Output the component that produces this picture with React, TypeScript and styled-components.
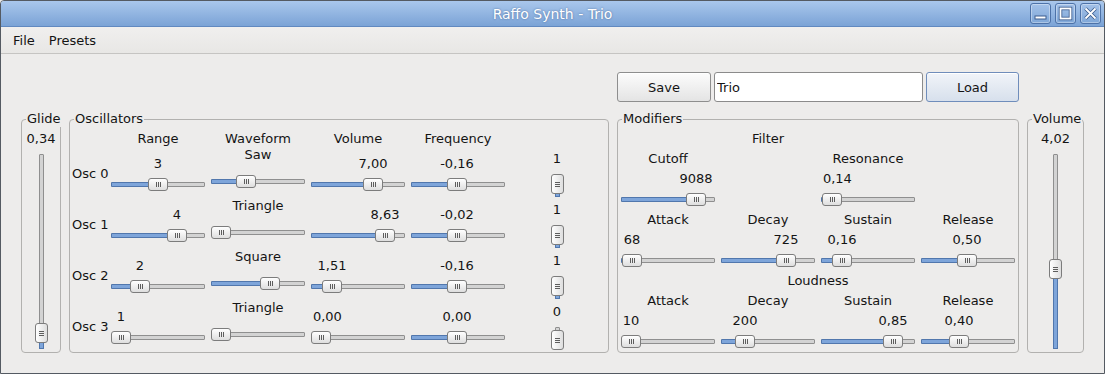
import React from 'react';
import styled, { createGlobalStyle } from 'styled-components';

const GlobalStyle = createGlobalStyle`
  html, body {
    margin: 0;
    padding: 0;
    background: #edeceb;
  }
  body {
    font-family: "DejaVu Sans", "Liberation Sans", sans-serif;
    font-size: 13px;
    color: #141414;
  }
`;

const Window = styled.div`
  width: 1105px;
  height: 374px;
  box-sizing: border-box;
  border: 1px solid #545a62;
  border-radius: 4px 4px 0 0;
  background: #edeceb;
  display: flex;
  flex-direction: column;
  overflow: hidden;
`;

const TitleBar = styled.div`
  height: 25px;
  display: grid;
  grid-template-columns: 1fr auto 1fr;
  align-items: center;
  background: linear-gradient(#a9c7ec, #7ba3d6);
  border-bottom: 1px solid #6189c0;
`;

const TitleText = styled.div`
  grid-column: 2;
  color: #fff;
  font-size: 14px;
  text-shadow: 0 0 2px rgba(30, 60, 110, 0.6);
`;

const TitleButtons = styled.div`
  grid-column: 3;
  justify-self: end;
  display: flex;
  gap: 4px;
  margin-right: 3px;
`;

const TitleButton = styled.div`
  width: 21px;
  height: 21px;
  box-sizing: border-box;
  border: 1px solid #4d72a8;
  border-radius: 3px;
  background: linear-gradient(#a3c1e8, #7fa7d8);
  box-shadow: inset 0 0 0 1px rgba(255, 255, 255, 0.35);
  display: flex;
  align-items: center;
  justify-content: center;
`;

const MenuBar = styled.div`
  height: 26px;
  display: flex;
  align-items: center;
  gap: 14px;
  padding: 0 12px;
  background: linear-gradient(#f0efee, #e8e7e5);
  border-bottom: 1px solid #c5c4c2;
  font-size: 13px;
`;

const Content = styled.div`
  flex: 1;
  padding: 18px 20px 0 20px;
  display: grid;
  grid-template-columns: 40px 540px 402px 57px;
  grid-template-rows: 30px 234px;
  column-gap: 8px;
  row-gap: 17px;
`;

const PresetRow = styled.div`
  grid-column: 3;
  grid-row: 1;
  display: grid;
  grid-template-columns: 94px 1fr 93px;
  gap: 3px;
`;

const PushButton = styled.button<{ $default?: boolean }>`
  font: inherit;
  color: #141414;
  margin: 0;
  padding: 0;
  border: 1px solid ${(p) => (p.$default ? '#6f8dbb' : '#8e8e8e')};
  border-radius: 3px;
  background: ${(p) =>
    p.$default ? 'linear-gradient(#f1f4f9, #d7e0ec)' : 'linear-gradient(#fcfcfc, #e4e4e4)'};
  box-shadow: inset 0 1px 0 #fff;
`;

const NameInput = styled.input`
  font: inherit;
  color: #141414;
  margin: 0;
  padding: 0 2px;
  border: 1px solid #8b8b8b;
  border-radius: 3px;
  background: #fff;
  outline: none;
`;

const GroupBox = styled.div<{ $col: number }>`
  grid-column: ${(p) => p.$col};
  grid-row: 2;
  position: relative;
  box-sizing: border-box;
  border: 1px solid #b2b1af;
  border-radius: 4px;
`;

const GroupTitle = styled.div`
  position: absolute;
  top: -9px;
  left: 4px;
  padding: 0 1px;
  line-height: 16px;
  background: #edeceb;
  white-space: nowrap;
`;

const VerticalGroup = styled.div`
  display: flex;
  flex-direction: column;
  align-items: center;
  padding-top: 9px;
`;

const TextLine = styled.div`
  line-height: 20px;
  white-space: nowrap;
`;

/* ---- sliders ---- */

const SliderCell = styled.div<{ $w: number }>`
  width: ${(p) => p.$w}px;
  display: flex;
  flex-direction: column;
`;

const ValueText = styled.div`
  align-self: flex-start;
  line-height: 20px;
  white-space: nowrap;
  transform: translateX(-50%);
`;

const SliderArea = styled.div`
  height: 21px;
  display: flex;
  align-items: center;
`;

const HTrack = styled.div<{ $w: number }>`
  position: relative;
  width: ${(p) => p.$w}px;
  height: 13px;
  display: flex;
  align-items: center;
`;

const HGroove = styled.div`
  width: 100%;
  height: 5px;
  box-sizing: border-box;
  border: 1px solid #8f8f8f;
  background: #d3d3d3;
  border-radius: 1px;
`;

const HFill = styled.div`
  position: absolute;
  left: 0;
  top: 4px;
  height: 5px;
  box-sizing: border-box;
  border: 1px solid #5177ad;
  background: #7ea5da;
  border-radius: 1px;
`;

const Handle = styled.div<{ $vertical?: boolean }>`
  position: absolute;
  box-sizing: border-box;
  width: ${(p) => (p.$vertical ? '13px' : '20px')};
  height: ${(p) => (p.$vertical ? '20px' : '13px')};
  border: 1px solid #7c7c7c;
  border-radius: 3px;
  background: linear-gradient(${(p) => (p.$vertical ? '90deg' : '180deg')}, #ffffff, #dedede);
  display: flex;
  align-items: center;
  justify-content: center;
`;

const Grip = styled.div<{ $vertical?: boolean }>`
  width: 5px;
  height: 5px;
  background: repeating-linear-gradient(
    ${(p) => (p.$vertical ? '180deg' : '90deg')},
    #5d5d5d 0 1px,
    transparent 1px 2px
  );
`;

const VTrack = styled.div<{ $len: number }>`
  position: relative;
  width: 13px;
  height: ${(p) => p.$len}px;
  display: flex;
  justify-content: center;
`;

const VGroove = styled.div`
  width: 5px;
  height: 100%;
  box-sizing: border-box;
  border: 1px solid #8f8f8f;
  background: #d3d3d3;
  border-radius: 1px;
`;

const VFill = styled.div`
  position: absolute;
  bottom: 0;
  left: 4px;
  width: 5px;
  box-sizing: border-box;
  border: 1px solid #5177ad;
  background: #7ea5da;
`;

function HSlider({ frac, width = 94 }: { frac: number; width?: number }) {
  const left = Math.round(frac * (width - 20));
  return (
    <HTrack $w={width}>
      <HGroove />
      <HFill style={{ width: left + 10 }} />
      <Handle style={{ left }}>
        <Grip />
      </Handle>
    </HTrack>
  );
}

function VSlider({ frac, len }: { frac: number; len: number }) {
  const top = Math.round((1 - frac) * (len - 20));
  const fill = len - top - 10;
  return (
    <VTrack $len={len}>
      <VGroove />
      {frac > 0 && <VFill style={{ height: fill }} />}
      <Handle $vertical style={{ top }}>
        <Grip $vertical />
      </Handle>
    </VTrack>
  );
}

function ValueSlider({ value, frac, width = 94 }: { value: string; frac: number; width?: number }) {
  const center = Math.round(frac * (width - 20)) + 10;
  const half = (value.length * 8.2) / 2;
  const x = Math.min(Math.max(center, half), width - half);
  return (
    <SliderCell $w={width}>
      <ValueText style={{ marginLeft: x }}>{value}</ValueText>
      <SliderArea>
        <HSlider frac={frac} width={width} />
      </SliderArea>
    </SliderCell>
  );
}

/* ---- oscillators ---- */

const OscGrid = styled.div`
  display: grid;
  grid-template-columns: 35px repeat(4, 94px) 92px;
  grid-template-rows: 20px 46px 51px 51px 51px;
  column-gap: 6px;
  align-items: end;
  padding-top: 9px;
`;

const ColHeader = styled.div`
  line-height: 20px;
  text-align: center;
  white-space: nowrap;
`;

const OscLabel = styled.div`
  line-height: 20px;
  white-space: nowrap;
  padding-left: 2px;
  margin-bottom: 11px;
`;

const WaveCell = styled.div`
  display: flex;
  flex-direction: column;
  padding-bottom: 7px;
`;

const WaveName = styled.div`
  line-height: 20px;
  text-align: center;
  margin-bottom: 10px;
`;

const SwitchCell = styled.div`
  display: flex;
  flex-direction: column;
  align-items: center;
  gap: 5px;
  margin-bottom: -2px;
`;

/* ---- modifiers ---- */

const ModGrid = styled.div`
  display: grid;
  grid-template-columns: repeat(4, 94px);
  column-gap: 6px;
  padding: 9px 0 0 3px;
`;

const SectionTitle = styled.div<{ $span: string }>`
  grid-column: ${(p) => p.$span};
  line-height: 20px;
  text-align: center;
`;

const ParamTitle = styled.div<{ $col: number }>`
  grid-column: ${(p) => p.$col};
  line-height: 20px;
  text-align: center;
`;

const CellSlot = styled.div<{ $col: number }>`
  grid-column: ${(p) => p.$col};
`;

const oscRows = [
  { range: '3', rf: 0.5, wave: 'Saw', wf: 1 / 3, vol: '7,00', vf: 0.7, freq: '-0,16', on: 1 },
  { range: '4', rf: 0.75, wave: 'Triangle', wf: 0, vol: '8,63', vf: 0.863, freq: '-0,02', on: 1 },
  { range: '2', rf: 0.25, wave: 'Square', wf: 2 / 3, vol: '1,51', vf: 0.151, freq: '-0,16', on: 1 },
  { range: '1', rf: 0, wave: 'Triangle', wf: 0, vol: '0,00', vf: 0, freq: '0,00', on: 0 },
];

const envNames = ['Attack', 'Decay', 'Sustain', 'Release'];
const filterEnv = [
  { v: '68', f: 0.014 },
  { v: '725', f: 0.74 },
  { v: '0,16', f: 0.15 },
  { v: '0,50', f: 0.49 },
];
const loudEnv = [
  { v: '10', f: 0 },
  { v: '200', f: 0.19 },
  { v: '0,85', f: 0.84 },
  { v: '0,40', f: 0.38 },
];

function WinIcon({ kind }: { kind: 'min' | 'max' | 'close' }) {
  const dark = '#3c5d8e';
  if (kind === 'min') {
    return (
      <svg width="17" height="17" viewBox="0 0 17 17">
        <rect x="3" y="11" width="11" height="3" fill="#fff" stroke={dark} strokeWidth="1" />
      </svg>
    );
  }
  if (kind === 'max') {
    return (
      <svg width="17" height="17" viewBox="0 0 17 17">
        <rect x="3.5" y="3.5" width="10" height="10" fill="none" stroke={dark} strokeWidth="3.5" />
        <rect x="3.5" y="3.5" width="10" height="10" fill="none" stroke="#fff" strokeWidth="1.8" />
      </svg>
    );
  }
  return (
    <svg width="17" height="17" viewBox="0 0 17 17">
      <path d="M3.5 3.5 L13.5 13.5 M13.5 3.5 L3.5 13.5" stroke={dark} strokeWidth="3.5" />
      <path d="M3.5 3.5 L13.5 13.5 M13.5 3.5 L3.5 13.5" stroke="#fff" strokeWidth="1.8" />
    </svg>
  );
}

function EnvelopeRows({ prefix, env }: { prefix: string; env: { v: string; f: number }[] }) {
  return (
    <>
      {envNames.map((n, i) => (
        <ParamTitle key={prefix + 't' + i} $col={i + 1}>
          {n}
        </ParamTitle>
      ))}
      {env.map((e, i) => (
        <CellSlot key={prefix + 'c' + i} $col={i + 1}>
          <ValueSlider value={e.v} frac={e.f} />
        </CellSlot>
      ))}
    </>
  );
}

export default function App() {
  return (
    <>
      <GlobalStyle />
      <Window>
        <TitleBar>
          <TitleText>Raffo Synth - Trio</TitleText>
          <TitleButtons>
            <TitleButton>
              <WinIcon kind="min" />
            </TitleButton>
            <TitleButton>
              <WinIcon kind="max" />
            </TitleButton>
            <TitleButton>
              <WinIcon kind="close" />
            </TitleButton>
          </TitleButtons>
        </TitleBar>

        <MenuBar>
          <span>File</span>
          <span>Presets</span>
        </MenuBar>

        <Content>
          <PresetRow>
            <PushButton>Save</PushButton>
            <NameInput value="Trio" readOnly />
            <PushButton $default>Load</PushButton>
          </PresetRow>

          <GroupBox $col={1}>
            <GroupTitle>Glide</GroupTitle>
            <VerticalGroup>
              <TextLine>0,34</TextLine>
              <div style={{ height: 5 }} />
              <VSlider frac={0.034} len={195} />
            </VerticalGroup>
          </GroupBox>

          <GroupBox $col={2}>
            <GroupTitle>Oscillators</GroupTitle>
            <OscGrid>
              <div />
              <ColHeader>Range</ColHeader>
              <ColHeader>Waveform</ColHeader>
              <ColHeader>Volume</ColHeader>
              <ColHeader>Frequency</ColHeader>
              <div />
              {oscRows.map((r, i) => (
                <React.Fragment key={i}>
                  <OscLabel>Osc {i}</OscLabel>
                  <ValueSlider value={r.range} frac={r.rf} />
                  <WaveCell>
                    <WaveName>{r.wave}</WaveName>
                    <HSlider frac={r.wf} />
                  </WaveCell>
                  <ValueSlider value={r.vol} frac={r.vf} />
                  <ValueSlider value={r.freq} frac={0.49} />
                  <SwitchCell>
                    <TextLine>{r.on}</TextLine>
                    <VSlider frac={r.on} len={23} />
                  </SwitchCell>
                </React.Fragment>
              ))}
            </OscGrid>
          </GroupBox>

          <GroupBox $col={3}>
            <GroupTitle>Modifiers</GroupTitle>
            <ModGrid>
              <SectionTitle $span="1 / 4">Filter</SectionTitle>
              <ParamTitle $col={1}>Cutoff</ParamTitle>
              <ParamTitle $col={3}>Resonance</ParamTitle>
              <CellSlot $col={1}>
                <ValueSlider value="9088" frac={0.88} />
              </CellSlot>
              <CellSlot $col={3}>
                <ValueSlider value="0,14" frac={0.014} />
              </CellSlot>
              <EnvelopeRows prefix="f" env={filterEnv} />
              <SectionTitle $span="1 / -1">Loudness</SectionTitle>
              <EnvelopeRows prefix="l" env={loudEnv} />
            </ModGrid>
          </GroupBox>

          <GroupBox $col={4}>
            <GroupTitle>Volume</GroupTitle>
            <VerticalGroup>
              <TextLine>4,02</TextLine>
              <div style={{ height: 5 }} />
              <VSlider frac={0.402} len={195} />
            </VerticalGroup>
          </GroupBox>
        </Content>
      </Window>
    </>
  );
}
